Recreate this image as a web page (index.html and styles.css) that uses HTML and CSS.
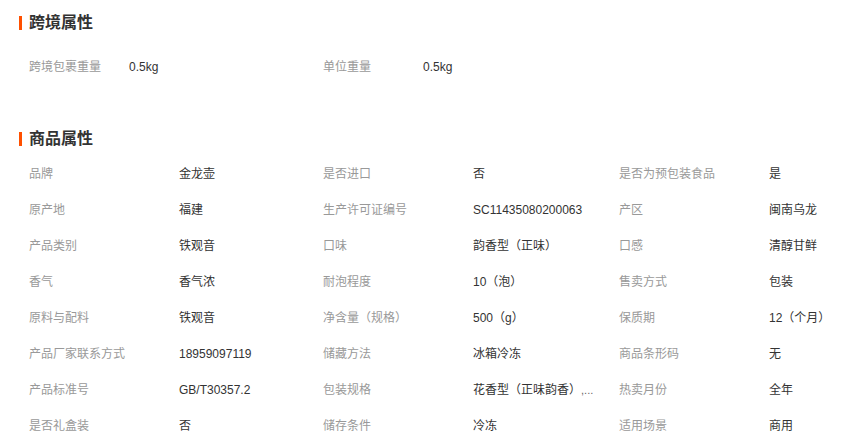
FILE: index.html
```html
<!DOCTYPE html>
<html lang="zh-CN">
<head>
  <meta charset="UTF-8" />
  <meta name="viewport" content="width=device-width, initial-scale=1.0" />
  <title>商品属性</title>
  <link rel="stylesheet" href="styles.css">
</head>
<body>
  <section class="attr-section">
    <h2 class="attr-title">跨境属性</h2>
    <div class="cross-list">
      <div class="cross-item"><span class="label">跨境包裹重量</span><span class="value">0.5kg</span></div>
      <div class="cross-item"><span class="label">单位重量</span><span class="value">0.5kg</span></div>
    </div>
  </section>

  <section class="attr-section product">
    <h2 class="attr-title">商品属性</h2>
    <div class="attr-grid">
      <div class="attr-item"><span class="label">品牌</span><span class="value">金龙壶</span></div>
      <div class="attr-item"><span class="label">是否进口</span><span class="value">否</span></div>
      <div class="attr-item"><span class="label">是否为预包装食品</span><span class="value">是</span></div>

      <div class="attr-item"><span class="label">原产地</span><span class="value">福建</span></div>
      <div class="attr-item"><span class="label">生产许可证编号</span><span class="value">SC11435080200063</span></div>
      <div class="attr-item"><span class="label">产区</span><span class="value">闽南乌龙</span></div>

      <div class="attr-item"><span class="label">产品类别</span><span class="value">铁观音</span></div>
      <div class="attr-item"><span class="label">口味</span><span class="value">韵香型（正味）</span></div>
      <div class="attr-item"><span class="label">口感</span><span class="value">清醇甘鲜</span></div>

      <div class="attr-item"><span class="label">香气</span><span class="value">香气浓</span></div>
      <div class="attr-item"><span class="label">耐泡程度</span><span class="value">10（泡）</span></div>
      <div class="attr-item"><span class="label">售卖方式</span><span class="value">包装</span></div>

      <div class="attr-item"><span class="label">原料与配料</span><span class="value">铁观音</span></div>
      <div class="attr-item"><span class="label">净含量（规格）</span><span class="value">500（g）</span></div>
      <div class="attr-item"><span class="label">保质期</span><span class="value">12（个月）</span></div>

      <div class="attr-item"><span class="label">产品厂家联系方式</span><span class="value">18959097119</span></div>
      <div class="attr-item"><span class="label">储藏方法</span><span class="value">冰箱冷冻</span></div>
      <div class="attr-item"><span class="label">商品条形码</span><span class="value">无</span></div>

      <div class="attr-item"><span class="label">产品标准号</span><span class="value">GB/T30357.2</span></div>
      <div class="attr-item"><span class="label">包装规格</span><span class="value">花香型（正味韵香）<span class="more">,...</span></span></div>
      <div class="attr-item"><span class="label">热卖月份</span><span class="value">全年</span></div>

      <div class="attr-item"><span class="label">是否礼盒装</span><span class="value">否</span></div>
      <div class="attr-item"><span class="label">储存条件</span><span class="value">冷冻</span></div>
      <div class="attr-item"><span class="label">适用场景</span><span class="value">商用</span></div>
    </div>
  </section>
</body>
</html>
```

FILE: styles.css
```css
/* Global Styles */
* {
  box-sizing: border-box;
}
body {
  margin: 0;
  padding-top: 13px;
  font-family: 'Liberation Sans', 'Noto Sans CJK SC', sans-serif;
  font-size: 12px;
  color: #333;
  background-color: #fff;
  width: 854px;
  overflow: hidden;
}
.attr-title {
  display: flex;
  align-items: center;
  margin: 0;
  padding-left: 19px;
  height: 20px;
  line-height: 20px;
  font-size: 16px;
  font-weight: bold;
  color: #333;
}
.attr-title::before {
  content: "";
  width: 3px;
  height: 14px;
  margin-right: 7px;
  background-color: #ff5000;
}
.cross-list {
  display: flex;
  margin-top: 16px;
  padding-left: 29px;
}
.cross-item {
  display: flex;
  width: 294px;
  line-height: 36px;
}
.cross-item .label {
  width: 100px;
}
.label {
  color: #999;
  white-space: nowrap;
}
.value {
  color: #333;
  white-space: nowrap;
}
.more {
  font-size: 11px;
  color: #666;
}
.product {
  margin-top: 44px;
}
.attr-grid {
  display: grid;
  grid-template-columns: 294px 296px 260px;
  margin-top: 7px;
  padding-left: 29px;
}
.attr-item {
  display: flex;
  line-height: 36px;
  height: 36px;
}
.attr-item .label {
  width: 150px;
  flex-shrink: 0;
}
```
